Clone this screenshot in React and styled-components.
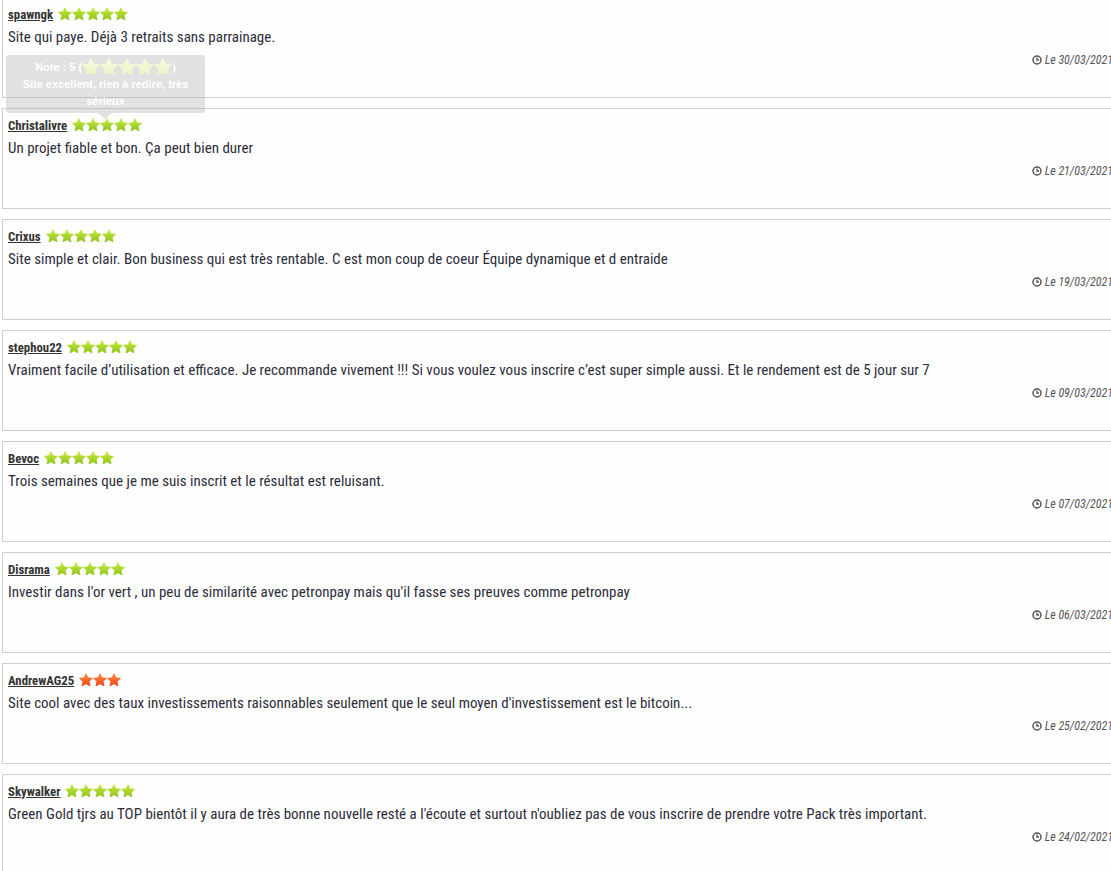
import React from "react"
import styled, { createGlobalStyle } from "styled-components"

const GlobalStyle = createGlobalStyle`
  html, body {
    margin: 0;
    padding: 0;
    overflow: hidden;
    background: #fff;
  }
`

const Page = styled.div`
  position: relative;
  padding-left: 2px;
  margin-top: -3px;
  font-family: "Roboto", "Liberation Sans Narrow", sans-serif;
  font-stretch: 75%;
`

const ReviewList = styled.ul`
  list-style-type: none;
  margin: 0;
  padding: 0;
  width: 1117px;
`

const ReviewCard = styled.li`
  position: relative;
  box-sizing: border-box;
  height: 101px;
  margin-bottom: 10px;
  padding: 6px 5px 0 5px;
  border: 1px solid #cfcfcf;
  background: #fefefe;
`

const Header = styled.div`
  display: flex;
  align-items: center;
  gap: 5px;
  height: 20px;
`

const Author = styled.a`
  font-size: 12.8px;
  font-weight: 700;
  color: #333;
  text-decoration: underline;
`

const Stars = styled.span`
  display: flex;
  height: 14px;
`

const Comment = styled.p`
  margin: 3px 0 0 0;
  font-size: 15px;
  line-height: 20px;
  color: #2d2d3a;
  white-space: nowrap;
`

const DateLine = styled.div`
  display: flex;
  justify-content: flex-end;
  align-items: center;
  gap: 3px;
  margin-top: 4px;
  font-size: 12px;
  font-style: italic;
  line-height: 18px;
  color: #555;
`

const Tooltip = styled.div`
  position: absolute;
  left: 6px;
  top: 58px;
  width: 199px;
  box-sizing: border-box;
  padding: 3px 8px 4px;
  border-radius: 3px;
  background: rgba(175, 175, 175, 0.36);
  color: #fff;
  font-family: "Liberation Sans", Arial, sans-serif;
  font-stretch: normal;
  font-size: 11px;
  font-weight: 700;
  line-height: 16.5px;
  text-align: center;

  &::after {
    content: "";
    position: absolute;
    left: 92px;
    bottom: -6px;
    border-left: 7px solid transparent;
    border-right: 7px solid transparent;
    border-top: 6px solid rgba(175, 175, 175, 0.36);
  }
`

const TipStars = styled.span`
  display: inline-flex;
  vertical-align: -5px;
`

const Star = ({ size = 14, color = "#8fc31f", light = "#c6ea3c" }) => {
  const id = color.replace("#", "s")
  return (
    <svg width={size} height={size} viewBox="0 0 24 24">
      <defs>
        <linearGradient id={id} x1="0" y1="0" x2="0" y2="1">
          <stop offset="0" stopColor={light} />
          <stop offset="1" stopColor={color} />
        </linearGradient>
      </defs>
      <path
        d="M12 1.2L15.29 8.27 23.1 9.09 17.33 14.53 18.9 22.2 12 18.4 5.1 22.2 6.67 14.53 0.9 9.09 8.71 8.27Z"
        fill={`url(#${id})`}
        stroke={`url(#${id})`}
        strokeWidth="1.4"
        strokeLinejoin="round"
      />
    </svg>
  )
}

const Clock = () => (
  <svg width="10" height="10" viewBox="0 0 10 10">
    <circle cx="5" cy="5" r="4" fill="none" stroke="#555" strokeWidth="1.5" />
    <path d="M5 2.6V5h2" fill="none" stroke="#555" strokeWidth="1.3" />
  </svg>
)

const reviews = [
  { name: "spawngk", stars: 5, text: "Site qui paye. Déjà 3 retraits sans parrainage.", date: "30/03/2021" },
  { name: "Christalivre", stars: 5, text: "Un projet fiable et bon. Ça peut bien durer", date: "21/03/2021" },
  { name: "Crixus", stars: 5, text: "Site simple et clair. Bon business qui est très rentable. C est mon coup de coeur Équipe dynamique et d entraide", date: "19/03/2021" },
  { name: "stephou22", stars: 5, text: "Vraiment facile d’utilisation et efficace. Je recommande vivement !!! Si vous voulez vous inscrire c’est super simple aussi. Et le rendement est de 5 jour sur 7", date: "09/03/2021" },
  { name: "Bevoc", stars: 5, text: "Trois semaines que je me suis inscrit et le résultat est reluisant.", date: "07/03/2021" },
  { name: "Disrama", stars: 5, text: "Investir dans l'or vert , un peu de similarité avec petronpay mais qu'il fasse ses preuves comme petronpay", date: "06/03/2021" },
  { name: "AndrewAG25", stars: 3, text: "Site cool avec des taux investissements raisonnables seulement que le seul moyen d'investissement est le bitcoin...", date: "25/02/2021" },
  { name: "Skywalker", stars: 5, text: "Green Gold tjrs au TOP bientôt il y aura de très bonne nouvelle resté a l'écoute et surtout n'oubliez pas de vous inscrire de prendre votre Pack très important.", date: "24/02/2021" },
]

const App = () => {
  return (
    <Page>
      <GlobalStyle />
      <ReviewList>
        {reviews.map((r) => (
          <ReviewCard key={r.name}>
            <Header>
              <Author href="#">{r.name}</Author>
              <Stars>
                {Array.from({ length: r.stars }).map((_, i) =>
                  r.stars < 4 ? (
                    <Star key={i} color="#f0441a" light="#ff8a3a" />
                  ) : (
                    <Star key={i} />
                  )
                )}
              </Stars>
            </Header>
            <Comment>{r.text}</Comment>
            <DateLine>
              <Clock />
              Le {r.date}
            </DateLine>
          </ReviewCard>
        ))}
      </ReviewList>
      <Tooltip>
        Note : 5 (
        <TipStars>
          {Array.from({ length: 5 }).map((_, i) => (
            <Star key={i} size={18} color="#eef3c4" light="#f7f9de" />
          ))}
        </TipStars>
        )
        <br />
        Site excellent, rien à redire, très sérieux
      </Tooltip>
    </Page>
  )
}

export default App
